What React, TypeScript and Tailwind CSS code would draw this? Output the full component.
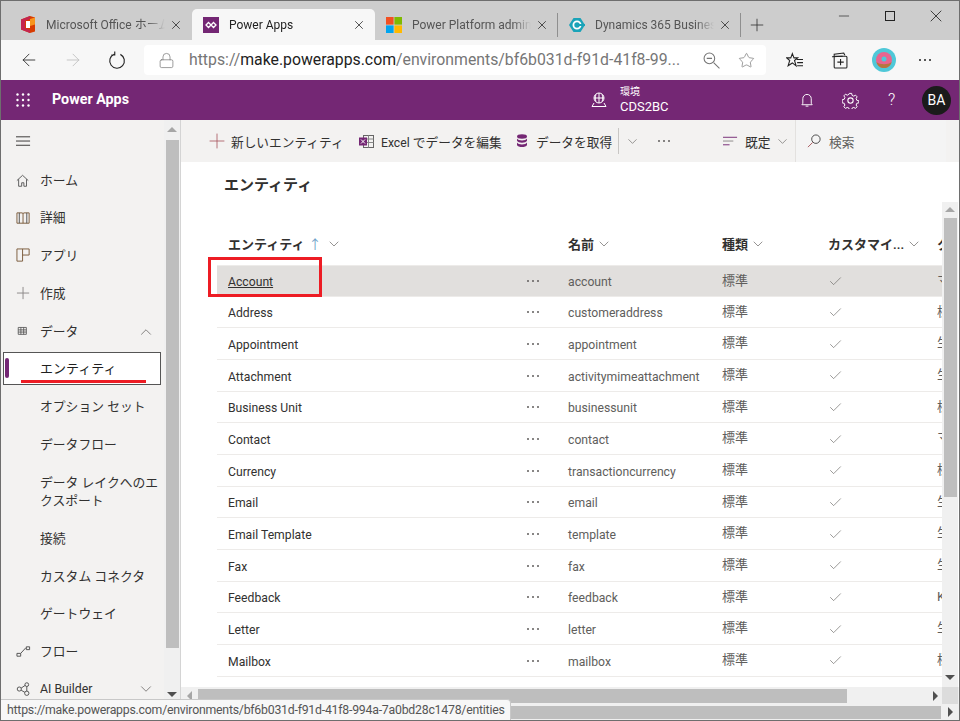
import { ArrowLeft, ArrowRight, Check, ChevronDown, ChevronUp, Lock, Minus, Plus, Star, X } from "lucide-react";
import type { ReactNode } from "react";

const rows = [
  ["Account", "account", "マ"],
  ["Address", "customeraddress", "標"],
  ["Appointment", "appointment", "生"],
  ["Attachment", "activitymimeattachment", "生"],
  ["Business Unit", "businessunit", "標"],
  ["Contact", "contact", "マ"],
  ["Currency", "transactioncurrency", "標"],
  ["Email", "email", "生"],
  ["Email Template", "template", "生"],
  ["Fax", "fax", "生"],
  ["Feedback", "feedback", "K"],
  ["Letter", "letter", "生"],
  ["Mailbox", "mailbox", "標"],
];

// small line icon wrapper, 16 box
function Ico({ size = 16, children, className = "" }: { size?: number; children: ReactNode; className?: string }) {
  return (
    <svg width={size} height={size} viewBox="0 0 16 16" fill="none" stroke="currentColor" strokeWidth="1" className={`shrink-0 ${className}`}>
      {children}
    </svg>
  );
}

function Dots({ className = "" }: { className?: string }) {
  return (
    <div className={`flex gap-[3px] shrink-0 ${className}`}>
      <span className="w-[2px] h-[2px] rounded-full bg-current" />
      <span className="w-[2px] h-[2px] rounded-full bg-current" />
      <span className="w-[2px] h-[2px] rounded-full bg-current" />
    </div>
  );
}

function Tri({ dir }: { dir: "up" | "down" | "left" | "right" }) {
  const pts = { up: "0,7 5,2 10,7", down: "0,3 10,3 5,8", left: "7,0 7,10 2,5", right: "3,0 3,10 8,5" };
  return (
    <svg width="10" height="10" viewBox="0 0 10 10" className="shrink-0">
      <polygon points={pts[dir]} fill={dir === "up" || dir === "left" ? "#a6a6a6" : "#505050"} />
    </svg>
  );
}

function Tab({ icon, label, active, sep }: { icon: ReactNode; label: string; active?: boolean; sep?: boolean }) {
  return (
    <div className={`flex items-center h-[31px] w-[183px] pl-[11px] shrink-0 ${active ? "bg-[#f7f7f7] rounded-t-[5px] text-[#222]" : "text-[#555]"}`}>
      <div className="w-[16px] h-[16px] shrink-0 flex items-center justify-center">{icon}</div>
      <div className="w-[119px] ml-[10px] overflow-hidden whitespace-nowrap text-[12px] [mask-image:linear-gradient(to_right,black_85%,transparent)]">
        {label}
      </div>
      <X size={14} strokeWidth={1.3} className="ml-[4px] text-[#222] shrink-0" />
      <div className={`ml-auto h-[24px] w-px ${sep ? "bg-[#8f8f8f]" : ""}`} />
    </div>
  );
}

function NavItem({ icon, label, chevron, h = "h-[37.6px]" }: { icon?: ReactNode; label: ReactNode; chevron?: "up" | "down"; h?: string }) {
  return (
    <div className={`flex items-center ${h} shrink-0 text-[#323130]`}>
      <div className="w-[39px] flex justify-center pl-[5px] shrink-0 text-[#505050]">{icon}</div>
      <div className="leading-[18px] whitespace-nowrap">{label}</div>
      {chevron === "up" && <ChevronUp size={18} strokeWidth={1} className="ml-auto mr-[9px] text-[#605e5c]" />}
      {chevron === "down" && <ChevronDown size={18} strokeWidth={1} className="ml-auto mr-[9px] text-[#605e5c]" />}
    </div>
  );
}

function Sidebar() {
  return (
    <aside className="w-[180px] shrink-0 flex bg-[#f3f2f1] border-r border-[#d4d4d4]">
      <div className="w-[163px] shrink-0 overflow-hidden flex flex-col text-[12.8px]">
        <div className="h-[42px] shrink-0 flex items-center pl-[15px] text-[#323130]">
          <Ico size={15}><path d="M0 3h15M0 7.5h15M0 12h15" /></Ico>
        </div>
        <NavItem label="ホーム" icon={<Ico size={14}><path d="M1 7.5 7.5 1.5 14 7.5M3 6v8h3.5v-4h2.5v4H12V6" /></Ico>} />
        <NavItem label="詳細" icon={<Ico size={15}><path d="M1 2h5.500c.6 0 1 .4 1 1v10M14 2H8.500c-.6 0-1 .4-1 1M1 2v11h13V2" stroke="#7a5a3a" /><path d="M3.500 2v11M11.500 2v11" /></Ico>} />
        <NavItem label="アプリ" icon={<Ico size={15}><path d="M1 1h13M1 1v13h6V1M7 7.500h7V1" stroke="#7a5a3a" /></Ico>} />
        <NavItem label="作成" icon={<Ico size={15}><path d="M7.500 1v13M1 7.500h13" stroke="#8a8886" /></Ico>} />
        <NavItem h="h-[38.600px]" label="データ" chevron="up" icon={<Ico size={13}><path d="M1.500 3h10v8.500h-10zM1.500 6h10M1.500 8.700h10M4.800 3v8.500M8.200 3v8.500" /></Ico>} />
        <div className="h-[33px] shrink-0 mt-[1px] mb-[3.600px] ml-[2px] w-[158px] bg-white border border-[#555] flex items-center">
          <div className="w-[4px] h-[20px] ml-[1px] rounded-full bg-[#742774]" />
          <span className="ml-[31px] text-[#201f1e] text-[13px]">エンティティ</span>
        </div>
        <NavItem label="オプション セット" />
        <NavItem label="データフロー" />
        <NavItem h="h-[56.400px]" label={<>データ レイクへのエ<br />クスポート</>} />
        <NavItem label="接続" />
        <NavItem label="カスタム コネクタ" />
        <NavItem label="ゲートウェイ" />
        <NavItem label="フロー" icon={<Ico size={15}><path d="M1 10h4v3H1zM11 3h3.500v3H11zM5 10 10.500 4" /></Ico>} />
        <NavItem label={<span className="text-[12.300px]">AI Builder</span>} chevron="down" icon={<Ico size={15}><circle cx="3.500" cy="7.500" r="2.200" /><circle cx="11.500" cy="2.800" r="2" /><circle cx="11.500" cy="12" r="2.300" /><path d="M5.500 6.500 9.800 3.600M5.500 8.800 9.400 11M11.500 4.800v5" /></Ico>} />
      </div>
      <Scrollbar thumb="h-[508px]" top="h-[20px]" />
    </aside>
  );
}

function Scrollbar({ thumb, top }: { thumb: string; top: string }) {
  return (
    <div className="flex-1 flex flex-col items-center bg-[#f0f0f0]">
      <div className={`${top} flex items-center justify-center`}><Tri dir="up" /></div>
      <div className={`w-[13px] bg-[#bebebe] ${thumb}`} />
      <div className="mt-auto h-[20px] flex items-center justify-center"><Tri dir="down" /></div>
    </div>
  );
}

function CommandBar() {
  return (
    <div className="h-[42px] shrink-0 flex items-center bg-[#f3f2f1] text-[12.700px] text-[#323130] whitespace-nowrap">
      <Plus size={24} strokeWidth={0.8} className="ml-[24px] text-[#a4525a] shrink-0" />
      <span className="ml-[2px] w-[113px] shrink-0 pt-[3px]">新しいエンティティ</span>
      <svg width="15" height="15" viewBox="0 0 15 15" className="ml-[15px] shrink-0">
        <rect x="4.500" y="1.500" width="10" height="12" fill="none" stroke="#666" />
        <path d="M4.500 5h10M4.500 8.500h10M9.500 1.500v12" stroke="#888" />
        <rect x="0" y="3.500" width="8" height="8" fill="#742774" />
        <path d="M2 5.500l4 4M6 5.500l-4 4" stroke="#fff" />
      </svg>
      <span className="ml-[7px] w-[119px] shrink-0 pt-[3px]"><span className="text-[12.200px]">Excel</span> でデータを編集</span>
      <svg width="12" height="14" viewBox="0 0 12 14" className="ml-[16px] shrink-0" fill="#742774">
        <ellipse cx="6" cy="2.500" rx="5" ry="2.200" />
        <path d="M1 4.500c1 2.600 9 2.600 10 0v2.200c-1 2.600-9 2.600-10 0zM1 8.500c1 2.600 9 2.600 10 0v2.500c-1 2.800-9 2.800-10 0z" />
      </svg>
      <span className="ml-[8px] w-[76px] shrink-0 pt-[3px]">データを取得</span>
      <div className="ml-[6px] h-[26px] w-px bg-[#c8c6c4] shrink-0" />
      <ChevronDown size={15} strokeWidth={1} className="ml-[6px] text-[#605e5c] shrink-0" />
      <Dots className="ml-[18px] text-[#605e5c]" />
      <Ico size={15} className="ml-[53px] text-[#742774]"><path d="M0 3.500h15" /><path d="M0 7.500h11" stroke="#8a8886" /><path d="M0 11.500h7" /></Ico>
      <span className="ml-[7px] w-[26px] shrink-0 pt-[3px]">既定</span>
      <ChevronDown size={15} strokeWidth={1} className="ml-[4px] text-[#605e5c] shrink-0" />
      <div className="ml-[5px] h-[42px] w-px bg-[#e3e1df] shrink-0" />
      <div className="flex items-center h-full w-[150px] shrink-0 bg-[#f4f4f4] text-[#605e5c]">
        <Ico size={15} className="ml-[11px]"><circle cx="9.500" cy="5.500" r="4.500" stroke="#444" /><path d="M6 9 1 14" stroke="#a4525a" /></Ico>
        <span className="ml-[7px] pt-[3px]">検索</span>
      </div>
    </div>
  );
}

function Table() {
  return (
    <div className="w-[761px] shrink-0 overflow-hidden pl-[36px] text-[12.200px]">
      <div className="h-[63px] flex items-end pb-[11px] pl-[11px] whitespace-nowrap font-semibold text-[13px] text-[#323130]">
        <div className="w-[340px] shrink-0 flex items-center">
          <span>エンティティ</span>
          <span className="ml-[4px] text-[#6f9fc8] font-normal">↑</span>
          <ChevronDown size={16} strokeWidth={1} className="ml-[5px] text-[#605e5c]" />
        </div>
        <div className="w-[154px] shrink-0 flex items-center">名前<ChevronDown size={16} strokeWidth={1} className="ml-[2px] text-[#605e5c]" /></div>
        <div className="w-[106px] shrink-0 flex items-center">種類<ChevronDown size={16} strokeWidth={1} className="ml-[2px] text-[#605e5c]" /></div>
        <div className="w-[109px] shrink-0 flex items-center">カスタマイ...<ChevronDown size={16} strokeWidth={1} className="ml-[2px] text-[#605e5c]" /></div>
        <div className="shrink-0">ク</div>
      </div>
      {rows.map((r, i) => (
        <div key={r[0]} className={`h-[31.670px] flex items-center pl-[11px] pt-[3px] whitespace-nowrap border-b border-[#edebe9] text-[#605e5c] ${i === 0 ? "bg-[#e1dfdd] border-t border-t-[#edebe9]" : ""}`}>
          <div className={`w-[285px] shrink-0 text-[#323130] ${i === 0 ? "underline" : ""}`}>{r[0]}</div>
          <Dots className="w-[55px] pl-[14px] -mt-[2px] text-[#605e5c]" />
          <div className="w-[154px] shrink-0">{r[1]}</div>
          <div className="w-[106px] shrink-0 -mt-[4px] text-[13px]">標準</div>
          <div className="w-[109px] shrink-0 -mt-[2px]"><Check size={15} strokeWidth={1} className="text-[#605e5c]" /></div>
          <div className="w-[5px] shrink-0 overflow-hidden -mt-[4px] text-[13px]">{r[2]}</div>
        </div>
      ))}
    </div>
  );
}

function Main() {
  return (
    <main className="flex-1 min-w-0 flex flex-col bg-white">
      <CommandBar />
      <div className="h-[40px] shrink-0 pl-[43px] pt-[13px] text-[15px] font-bold text-[#323130] leading-[20px]">エンティティ</div>
      <div className="flex-1 min-h-0 flex">
        <Table />
        <div className="w-[16px] flex flex-col"><Scrollbar thumb="h-[279px]" top="h-[16px]" /></div>
      </div>
      <div className="h-[17px] shrink-0 flex items-center bg-[#f0f0f0]">
        <div className="w-[17px] flex justify-center"><Tri dir="left" /></div>
        <div className="w-[649px] h-[14px] bg-[#bebebe]" />
        <div className="ml-[80px] w-[15px] flex justify-center"><Tri dir="right" /></div>
        <div className="w-[16px] h-full bg-[#dcdcdc]" />
      </div>
    </main>
  );
}

export default function App() {
  return (
    <div className="relative w-[960px] h-[721px] box-border overflow-hidden flex flex-col border-l border-t border-b border-r border-[#6e6e6e] bg-[#f7f7f7] font-['Roboto','Noto_Sans_CJK_JP',sans-serif]">
      {/* tabs */}
      <div className="h-[39px] shrink-0 flex items-end pl-[8px] bg-[#cdcdcd]">
        <Tab
          label="Microsoft Office ホーム"
          icon={
            <svg width="14" height="17" viewBox="0 0 14 17">
              <path d="M0 3.500 9 0l5 1.500v14L9 17 0 13.500z" fill="#d83b01" />
              <path d="M0 3.500 9 0v3L4 5v7l5 2v3L0 13.500z" fill="#c4264f" />
              <path d="M5 5h4v7H5z" fill="#fff" />
              <path d="M9 3l5-1.500v7L9 10z" fill="#f7941d" />
            </svg>
          }
        />
        <Tab
          active
          label="Power Apps"
          icon={
            <svg width="16" height="16" viewBox="0 0 16 16">
              <rect width="16" height="16" fill="#742774" />
              <path d="M5.500 5.500 8 8l-2.500 2.500L3 8zM10.500 5.500 13 8l-2.500 2.500L8 8z" fill="none" stroke="#fff" strokeWidth="1.300" />
            </svg>
          }
        />
        <Tab
          sep
          label="Power Platform admin center"
          icon={
            <svg width="16" height="16" viewBox="0 0 16 16">
              <rect width="7.600" height="7.600" fill="#f25022" />
              <rect x="8.400" width="7.600" height="7.600" fill="#7fba00" />
              <rect y="8.400" width="7.600" height="7.600" fill="#00a4ef" />
              <rect x="8.400" y="8.400" width="7.600" height="7.600" fill="#ffb900" />
            </svg>
          }
        />
        <Tab
          sep
          label="Dynamics 365 Business Central"
          icon={
            <svg width="16" height="16" viewBox="0 0 16 16">
              <path d="M4.500 1h7L16 8l-4.500 7h-7L0 8z" fill="#1aa3b8" />
              <circle cx="8" cy="8" r="3.600" fill="none" stroke="#fff" strokeWidth="1.800" />
              <rect x="9" y="7" width="7" height="2" fill="#1aa3b8" />
            </svg>
          }
        />
        <Plus size={20} strokeWidth={1} className="ml-[6px] mb-[5px] text-[#333]" />
        <div className="ml-auto self-start flex items-center h-[30px] text-[#222]">
          <Minus size={16} strokeWidth={1} />
          <div className="ml-[33px] w-[10px] h-[10px] border border-[#222]" />
          <X size={20} strokeWidth={1} className="ml-[31px] mr-[13px]" />
        </div>
      </div>

      {/* address bar */}
      <div className="h-[40px] shrink-0 flex items-center bg-[#f7f7f7] text-[#222]">
        <ArrowLeft size={20} strokeWidth={1} className="ml-[18px]" />
        <ArrowRight size={20} strokeWidth={1} className="ml-[24px] text-[#bdbdbd]" />
        <Ico size={18} className="ml-[25px]"><path d="M5.500 2.800A6.500 6.500 0 1 0 11 3M6 .5v3H3" /></Ico>
        <div className="ml-[18px] w-[622px] h-[30px] rounded-[4px] bg-white flex items-center text-[#767676]">
          <Lock size={17} strokeWidth={1} className="ml-[14px] shrink-0" />
          <div className="ml-[14px] w-[494px] shrink-0 whitespace-nowrap text-[15.800px]">
            https://<span className="text-[#222]">make.powerapps.com</span>/environments/bf6b031d-f91d-41f8-99...
          </div>
          <Ico size={17} className="ml-[20px]"><circle cx="6" cy="6" r="5" /><path d="M3.500 6h5M10 10l5.500 5.500" /></Ico>
          <Star size={17} strokeWidth={1} className="ml-[18px]" />
        </div>
        <Ico size={17} className="ml-[20px]"><path d="M6 1.500 7.500 5.500H11L8 8l1.500 5L6 10.300 2 13l1.500-5L.5 5.500H4.500z" fill="none" /><path d="M10 7h6M10.500 10h5.500M10.500 13h5.500" /></Ico>
        <Ico size={17} className="ml-[28px]"><path d="M3 4V2l9-1 1 2M1 4.500l10-.5" /><rect x="3" y="4" width="12" height="11" rx="1" /><path d="M9 6.500v6M6 9.500h6" /></Ico>
        <svg width="24" height="24" viewBox="0 0 24 24" className="ml-[24px] shrink-0">
          <circle cx="12" cy="12" r="12" fill="#4fc8d8" />
          <circle cx="12" cy="12" r="8" fill="#e8648f" />
          <path d="M4.500 14c1 4 4 6 7.500 6s6.500-2 7.500-6c-3 3-12 3-15 0z" fill="#b5763f" />
          <circle cx="12" cy="11" r="2.500" fill="#4fc8d8" />
        </svg>
        <Dots className="ml-[23px] text-[#222]" />
      </div>

      {/* suite header */}
      <div className="h-[40px] shrink-0 flex items-center bg-[#742774] text-white">
        <div className="w-[590px] shrink-0 flex items-center">
          <svg width="14" height="14" viewBox="0 0 14 14" fill="#fff" className="ml-[15px] shrink-0">
            {[1.500, 7, 12.500].flatMap((y) => [1.500, 7, 12.500].map((x) => <circle key={`${x}-${y}`} cx={x} cy={y} r="1.200" />))}
          </svg>
          <span className="ml-[22px] text-[14.300px] font-bold whitespace-nowrap">Power Apps</span>
        </div>
        <Ico size={16}><circle cx="8" cy="6" r="5" /><path d="M3 6h10M8 1v10M5 2.500c-1 2-1 5 0 7M11 2.500c1 2 1 5 0 7M3 11l-2 3.500h14L13 11" /></Ico>
        <div className="ml-[13px] flex flex-col w-[60px] shrink-0 whitespace-nowrap">
          <span className="text-[10px] leading-[12px]">環境</span>
          <span className="text-[13px] leading-[17px]">CDS2BC</span>
        </div>
        <Ico size={15} className="ml-[120px]"><path d="M3 11V6a4.500 4.500 0 0 1 9 0v5l1 1.500H2zM6 14h3" /></Ico>
        <Ico size={17} className="ml-[27px]"><circle cx="8" cy="8" r="2.500" /><path d="M6.800 1h2.400l.4 2 1.700.8 1.800-1 1.600 1.700-1 1.700.7 1.800 2 .4v2.200l-2 .4-.7 1.800 1 1.700-1.600 1.700-1.800-1-1.700.7-.4 2H6.800l-.4-2-1.700-.7-1.800 1-1.600-1.700 1-1.700-.7-1.800-2-.4V7.400l2-.4.7-1.800-1-1.700L2.900 1.800l1.800 1 1.700-.8z" transform="scale(.93) translate(.6 .4)" /></Ico>
        <span className="ml-[29px] w-[8px] shrink-0 text-[16px] font-light leading-none">?</span>
        <div className="ml-[26px] w-[29px] h-[29px] shrink-0 rounded-full bg-[#1b1b1b] flex items-center justify-center text-[14px]">BA</div>
      </div>

      {/* body */}
      <div className="flex-1 min-h-0 flex">
        <Sidebar />
        <Main />
      </div>

      {/* page horizontal scrollbar */}
      <div className="h-[16px] shrink-0 flex items-center justify-end bg-[#f0f0f0]">
        <div className="flex-1 h-[13px] bg-[#bebebe]" />
        <div className="w-[18px] flex justify-center"><Tri dir="right" /></div>
      </div>

      {/* annotations and status bubble sit over the page */}
      <div className="absolute left-[207px] top-[256px] w-[114px] h-[40px] border-[3px] border-[#ed1c24]" />
      <div className="absolute left-[20px] top-[379px] w-[125px] h-[3px] bg-[#ed1c24]" />
      <div className="absolute left-0 top-[698px] w-[510px] h-[22px] bg-[#f7f7f7] border-t border-r border-[#c8c8c8] rounded-tr-[4px] pl-[6px] text-[12.300px] tracking-[-0.23px] leading-[21px] text-[#555] whitespace-nowrap">
        https://make.powerapps.com/environments/bf6b031d-f91d-41f8-994a-7a0bd28c1478/entities
      </div>
    </div>
  );
}
